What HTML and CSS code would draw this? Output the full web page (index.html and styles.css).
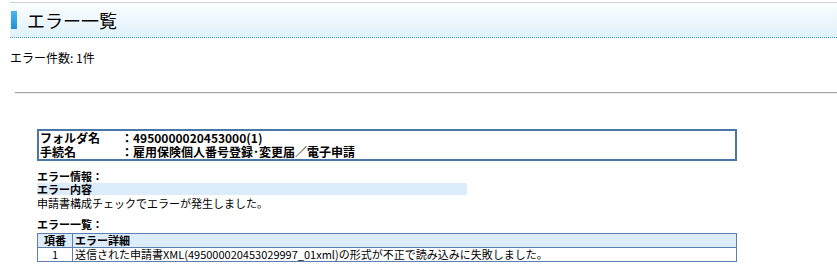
FILE: index.html
```html
<!DOCTYPE html>
<html lang="ja">
<head>
    <meta charset="UTF-8">
    <title>エラー一覧</title>
    <link rel="stylesheet" href="styles.css">
</head>
<body>
    <div class="page-title">
        <span class="title-bar"></span>
        <h1>エラー一覧</h1>
    </div>
    <p class="count">エラー件数: 1件</p>
    <hr class="divider">
    <section class="result">
        <table class="info-box">
            <tr>
                <th>フォルダ名</th>
                <td>：4950000020453000(1)</td>
            </tr>
            <tr>
                <th>手続名</th>
                <td>：雇用保険個人番号登録･変更届／電子申請</td>
            </tr>
        </table>

        <h2 class="caption">エラー情報：</h2>
        <div class="sub-caption">エラー内容</div>
        <p class="message">申請書構成チェックでエラーが発生しました。</p>

        <h2 class="caption">エラー一覧：</h2>
        <table class="error-list">
            <tr>
                <th class="no">項番</th>
                <th>エラー詳細</th>
            </tr>
            <tr>
                <td class="no">1</td>
                <td>送信された申請書XML(495000020453029997_01xml)の形式が不正で読み込みに失敗しました。</td>
            </tr>
        </table>
    </section>
</body>
</html>
```

FILE: styles.css
```css
*{
    margin: 0;
    padding: 0;
    box-sizing: border-box;
}
body{
    font-family: "Noto Sans CJK JP", "DejaVu Sans", sans-serif;
    font-size: 12px;
    color: #000;
    background: #fff;
}
.page-title{
    display: flex;
    align-items: center;
    margin: 2px 0 0 10px;
    height: 36px;
    border-top: 1px solid #cfd3d8;
    border-bottom: 1px dotted #3d97a8;
    background: linear-gradient(#fbfdfe, #dff1fb);
}
.title-bar{
    width: 6px;
    height: 18px;
    margin: 0 10px 0 1px;
    background: linear-gradient(#4fb6ec, #1f8fd6);
}
.page-title h1{
    font-size: 18px;
    font-weight: normal;
    line-height: 20px;
}
.count{
    margin: 13px 0 0 10px;
    line-height: 14px;
}
.divider{
    margin: 27px 0 0 15px;
    border: 0;
    border-top: 1px solid #a3a3a3;
    border-bottom: 1px solid #ececec;
}
.result{
    margin: 35px 0 0 37px;
    width: 700px;
    font-size: 11px;
    line-height: 12px;
}
.info-box{
    width: 100%;
    border: 2px solid #4a76a6;
    border-collapse: collapse;
    font-size: 12px;
    line-height: 14px;
}
.info-box th, .info-box td{
    font-weight: bold;
    text-align: left;
    padding: 0 0 0 1px;
}
.info-box th{
    width: 82px;
}
.caption{
    font-size: 11px;
    margin-top: 9px;
}
.sub-caption{
    width: 430px;
    margin-top: 1px;
    font-weight: bold;
    background: #ddecfb;
}
.message{
    margin-top: 2px;
}
.error-list{
    width: 100%;
    margin-top: 3px;
    border-collapse: collapse;
    line-height: 13px;
}
.error-list th, .error-list td{
    border: 1px solid #5a7fb0;
    padding: 0 0 0 2px;
    text-align: left;
}
.error-list th{
    background: #ddecfb;
}
.error-list .no{
    width: 35px;
    text-align: center;
    padding: 0;
}
```
